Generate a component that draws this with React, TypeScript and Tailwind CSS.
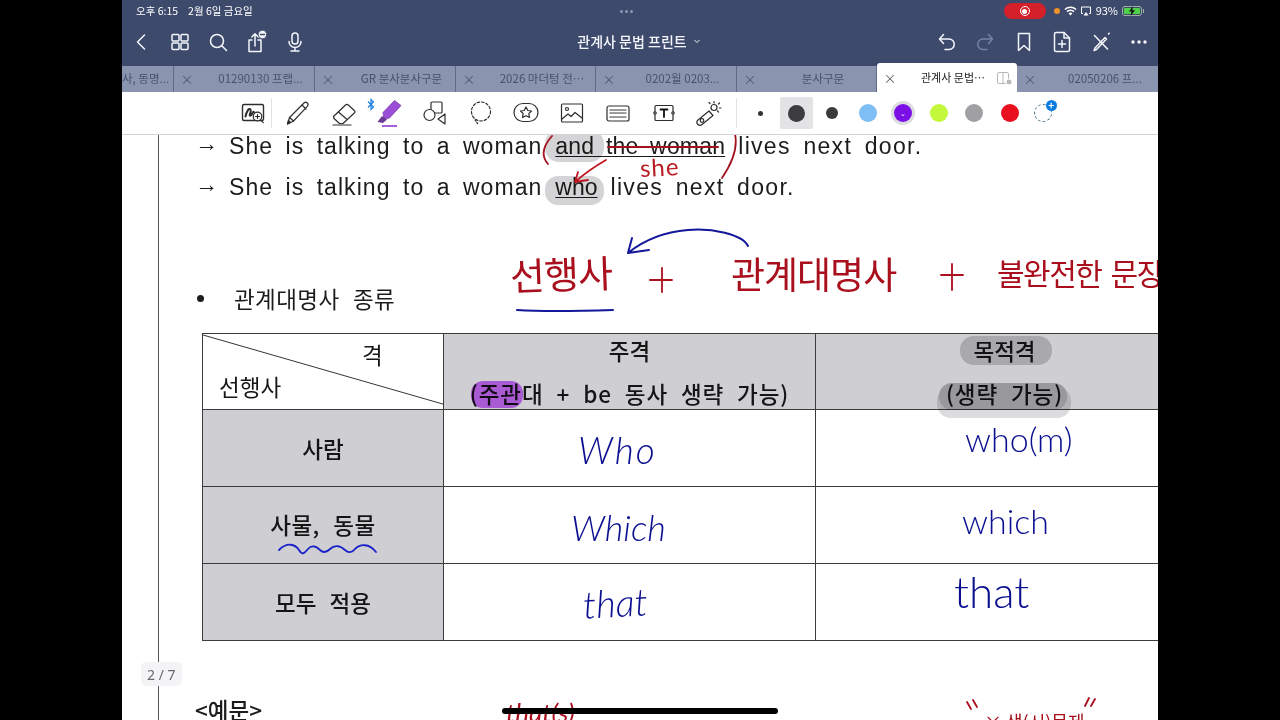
import React from "react";

const KR = "font-['Noto_Sans_CJK_KR','Noto_Sans',sans-serif]";

function NavIcon({ children, w = 24 }: { children: React.ReactNode; w?: number }) {
  return (
    <svg width={w} height={24} viewBox="0 0 24 24" fill="none" stroke="#f4f6fb" strokeWidth={1.5} strokeLinecap="round" strokeLinejoin="round">
      {children}
    </svg>
  );
}

function ToolIcon({ children }: { children: React.ReactNode }) {
  return (
    <svg width={28} height={28} viewBox="0 0 28 28" fill="none" stroke="#2e2e30" strokeWidth={1.2} strokeLinecap="round" strokeLinejoin="round">
      {children}
    </svg>
  );
}

function Tab({ label, w, noClose }: { label: string; w: string; noClose?: boolean }) {
  return (
    <div className={`${w} h-[26px] shrink-0 flex items-center bg-[#8a94ae] border-r border-[#5e6a8a] text-[#47526f] text-[11.5px]`}>
      {!noClose && <span className="w-[26px] text-center text-[13px] text-[#4e597a]">×</span>}
      <span className={`flex-1 whitespace-nowrap overflow-hidden ${noClose ? "text-right pr-[4px]" : "text-center pl-[7px]"}`}>{label}</span>
    </div>
  );
}

function Dot({ size, color, ring }: { size: string; color: string; ring?: boolean }) {
  return (
    <div className="w-[35.5px] h-[32px] flex items-center justify-center shrink-0">
      <div className={`${size} ${color} rounded-full flex items-center justify-center ${ring ? "ring-[3px] ring-[#dcdce0]" : ""}`}>
        {ring && <span className="text-white text-[7px] leading-none">⌄</span>}
      </div>
    </div>
  );
}

function Cell({ children, gray, border }: { children?: React.ReactNode; gray?: boolean; border?: boolean }) {
  return (
    <div className={`flex flex-col items-center justify-center border-b border-[#3c3c3c] ${border ? "border-r" : ""} ${gray ? "bg-[#cfced2]" : "bg-white"} text-[22.5px] text-[#151515] leading-none font-medium`}>
      {children}
    </div>
  );
}

export default function App() {
  return (
    <div className={`w-full h-[720px] bg-black flex justify-center overflow-hidden ${KR}`}>
      <div className="w-[1036px] h-[720px] flex flex-col bg-white relative overflow-hidden">
        {/* status bar */}
        <div className="h-[22px] shrink-0 bg-[#3d4a6c] flex items-center px-[14px] text-white text-[10.5px] leading-none relative">
          <span className="mr-[10px]">오후 6:15</span>
          <span>2월 6일 금요일</span>
          <div className="flex-1 flex justify-center gap-[2px] pr-[4px]">
            <span className="w-[3px] h-[3px] rounded-full bg-[#8b96b3]" />
            <span className="w-[3px] h-[3px] rounded-full bg-[#8b96b3]" />
            <span className="w-[3px] h-[3px] rounded-full bg-[#8b96b3]" />
          </div>
          <div className="w-[42px] h-[16px] rounded-full bg-[#d3202a] flex items-center justify-center mr-[8px]">
            <span className="w-[10px] h-[10px] rounded-full border border-white flex items-center justify-center">
              <span className="w-[5px] h-[5px] rounded-full bg-white" />
            </span>
          </div>
          <span className="w-[6px] h-[6px] rounded-full bg-[#f0922b] mr-[4px]" />
          <svg width="13" height="10" viewBox="0 0 13 10" className="mr-[3px]">
            <path d="M6.5 9.5 4.6 7.4a2.8 2.8 0 0 1 3.8 0ZM3.6 6.3 2.5 5.1a5.8 5.8 0 0 1 8 0L9.4 6.3a4.2 4.2 0 0 0-5.8 0ZM1.5 4 .4 2.9a8.9 8.9 0 0 1 12.2 0L11.5 4a7.3 7.3 0 0 0-10 0Z" fill="#fff" />
          </svg>
          <svg width="12" height="10" viewBox="0 0 12 10" className="mr-[4px]" fill="none" stroke="#fff" strokeWidth="1">
            <path d="M3 7.5H1.5V1h9v6.5H9" />
            <path d="M6 6 3.5 9.5h5Z" fill="#fff" stroke="none" />
          </svg>
          <span className="mr-[4px] text-[11px] -translate-y-[1.5px]">93%</span>
          <div className="relative w-[20px] h-[10px] border border-[#9fb0a0] rounded-[3px] p-[1px] mr-[1px]">
            <div className="w-full h-full bg-[#4fd24a] rounded-[1px]" />
            <svg width="10" height="10" viewBox="0 0 10 10" className="absolute left-[4px] -top-[1px]">
              <path d="M6 0 2 5.5h2.4L3.6 10 8 4.2H5.4Z" fill="#111" />
            </svg>
          </div>
          <span className="w-[1px] h-[4px] bg-[#9fb0a0]" />
        </div>

        {/* nav bar */}
        <div className="h-[44px] shrink-0 bg-[#3d4a6c] flex items-center relative pl-[7px] pr-[7px] pb-[4px] text-white">
          <div className="w-[24px] flex justify-center">
            <NavIcon><path d="M15.5 5 8.5 12l7 7" /></NavIcon>
          </div>
          <div className="ml-[15px] w-[24px]">
            <NavIcon>
              <rect x="4" y="4.500" width="7" height="6.500" rx="1" />
              <rect x="13" y="4.500" width="7" height="6.500" rx="1" />
              <rect x="4" y="13" width="7" height="6.500" rx="1" />
              <rect x="13" y="13" width="7" height="6.500" rx="1" />
            </NavIcon>
          </div>
          <div className="ml-[14px] w-[24px]">
            <NavIcon>
              <circle cx="11" cy="11" r="6.500" />
              <path d="m15.800 15.800 4.700 4.700" />
            </NavIcon>
          </div>
          <div className="ml-[13px] w-[24px]">
            <NavIcon w={26}>
              <path d="M8 10H5v11.500h12V10H14" />
              <path d="M11 16V4M7.800 7 11 3.800 14.200 7" />
              <circle cx="18.500" cy="4.500" r="4.200" fill="#f4f6fb" stroke="#3d4a6c" strokeWidth="0.800" />
              <path d="M16.500 4.500h4" stroke="#3d4a6c" strokeWidth="1.400" />
            </NavIcon>
          </div>
          <div className="ml-[16px] w-[24px]">
            <NavIcon>
              <rect x="9" y="3" width="6" height="11" rx="3" />
              <path d="M6 11.500a6 6 0 0 0 12 0M12 17.500V20M8 21h8" />
            </NavIcon>
          </div>
          <div className="absolute left-0 right-0 top-0 bottom-[6px] flex items-center justify-center pointer-events-none">
            <span className="text-[14px] font-medium text-[#f4f6fb] mr-[4px]">관계사 문법 프린트</span>
            <svg width="12" height="12" viewBox="0 0 12 12" fill="none" stroke="#f4f6fb" strokeWidth="1"><path d="m3.500 5 2.500 2.500L8.500 5" /></svg>
          </div>
          <div className="ml-auto flex items-center gap-[14.5px]">
            <NavIcon><path d="M8.500 4.500 4.500 9l4 4.500" /><path d="M5 9h9a5 5 0 0 1 0 10.500h-4" /></NavIcon>
            <svg width="24" height="24" viewBox="0 0 24 24" fill="none" stroke="#7683a3" strokeWidth={1.5} strokeLinecap="round" strokeLinejoin="round"><path d="m15.500 4.500 4 4.500-4 4.500" /><path d="M19 9h-9a5 5 0 0 0 0 10.500h4" /></svg>
            <NavIcon><path d="M6.500 3.500h11V20.500L12 15.500l-5.500 5Z" /></NavIcon>
            <NavIcon><path d="M14 2.500H6a1.500 1.500 0 0 0-1.500 1.500v16A1.500 1.500 0 0 0 6 21.500h12a1.500 1.500 0 0 0 1.500-1.500V8Z" /><path d="M14 2.500V8h5.500M12 10.500v7M8.500 14h7" /></NavIcon>
            <NavIcon>
              <path d="m5.500 5.500 13 13.500" />
              <path d="m5 20.500 2.500-1 10-10.500-1.500-1.500L6 18Z" />
              <path d="m19.500 4 .8-.8" />
            </NavIcon>
            <svg width="24" height="24" viewBox="0 0 24 24" fill="#f4f6fb"><circle cx="6" cy="12" r="1.700" /><circle cx="12" cy="12" r="1.700" /><circle cx="18" cy="12" r="1.700" /></svg>
          </div>
        </div>

        {/* tab strip */}
        <div className="h-[26px] shrink-0 bg-[#3d4a6c] flex items-end relative">
          <Tab label="사, 동명..." w="w-[52px]" noClose />
          <Tab label="01290130 프랩..." w="w-[141px]" />
          <Tab label="GR 분사분사구문" w="w-[141px]" />
          <Tab label="2026 마더텅 전⋯" w="w-[140px]" />
          <Tab label="0202월 0203..." w="w-[141px]" />
          <Tab label="분사구문" w="w-[140px]" />
          <div className="w-[140px] h-[29px] shrink-0 bg-white rounded-t-[3px] flex items-center text-[11px] text-[#222]">
            <span className="w-[26px] text-center text-[13px] text-[#666]">×</span>
            <span className="flex-1 text-center whitespace-nowrap pl-[8px]">관계사 문법⋯</span>
            <svg width="18" height="16" viewBox="0 0 18 16" fill="none" stroke="#b8b8bc" className="mr-[4px]">
              <rect x="2.500" y="2.500" width="11" height="11" rx="1.500" />
              <path d="M8 2.500v11" />
              <circle cx="14" cy="12" r="3" fill="#b8b8bc" stroke="#fff" />
            </svg>
          </div>
          <div className="flex-1 h-[26px] bg-[#8a94ae] flex items-center text-[#47526f] text-[11.500px]">
            <span className="w-[26px] text-center text-[13px] text-[#4e597a]">×</span>
            <span className="flex-1 text-center whitespace-nowrap pl-[9px]">02050206 프...</span>
          </div>
        </div>

        {/* tool bar */}
        <div className="h-[43px] shrink-0 bg-white border-b border-[#d5d5d8] flex items-center pl-[117px]">
          <ToolIcon>
            <rect x="3.500" y="5.500" width="21" height="16" rx="1.500" strokeWidth="1.400" />
            <path d="M6.500 17.500c1-5 3.500-9 5-7s-2.500 7 0 6 2-4.500 3.500-3.500" strokeWidth="2" />
            <circle cx="18.500" cy="17.500" r="4.300" fill="#fff" />
            <path d="M18.500 15.500v4M16.500 17.500h4M21.500 20.800l2.800 2.800" />
          </ToolIcon>
          <div className="w-[1px] h-[30px] bg-[#e2e2e4] ml-[4px] mr-[12px]" />
          <div className="flex items-center gap-[17.7px]">
            <ToolIcon>
              <path d="m3.500 25 2-6.500L20 4a2.200 2.200 0 0 1 3.300 3.300L9.500 22Z" />
              <path d="m18 6 4 4M5.500 18.500l4 3.500" />
              <path d="m3.500 25 1-3.500 2 2Z" fill="#222" />
            </ToolIcon>
            <ToolIcon>
              <path d="M3.500 17.500 15.500 6a2 2 0 0 1 2.800 0l6 5.500a1.500 1.500 0 0 1 0 2.500L13 24.500H9.500L4 19.500Z" />
              <path d="m8.500 13 8 7" />
              <path d="M3 26h18" />
            </ToolIcon>
            <div className="relative w-[28px] h-[28px]">
              <svg width="28" height="28" viewBox="0 0 28 28" fill="none" strokeLinejoin="round">
                <path d="M8 13.500 19.500 1.500 26 6.500 14.500 19 9 20Z" fill="#9b4fd6" stroke="#7a3ab0" strokeWidth="0.800" />
                <path d="m2.500 23 4.500-6 5 3.500-4 3.500Z" fill="#6b3a93" />
                <path d="M7 27h15" stroke="#9b4fd6" strokeWidth="1.800" />
              </svg>
              <svg width="8" height="13" viewBox="0 0 8 13" fill="none" stroke="#1d7fe0" strokeWidth="1.200" className="absolute -left-[8px] -top-[1px]">
                <path d="M1 3.500 6.500 9 4 11.500v-10L6.500 4 1 9.500" />
              </svg>
            </div>
            <ToolIcon>
              <rect x="10" y="3" width="11" height="11" rx="1" />
              <circle cx="8.500" cy="16" r="5.500" fill="#fff" />
              <path d="M24 15v10l-7-5Z" fill="#fff" />
            </ToolIcon>
            <ToolIcon>
              <circle cx="14" cy="12.500" r="9.500" strokeDasharray="2.500 2" />
              <path d="m8 21 3 4" strokeDasharray="1.500 1.500" />
            </ToolIcon>
            <ToolIcon>
              <rect x="2" y="4.500" width="24" height="18" rx="9" />
              <path d="m14 8 1.800 3.500 3.700.5-2.700 2.700.7 3.800-3.500-1.800-3.500 1.800.7-3.800L8.500 12l3.700-.5Z" />
            </ToolIcon>
            <ToolIcon>
              <rect x="3.500" y="5" width="21" height="18" rx="1" />
              <circle cx="9" cy="10" r="1.500" />
              <path d="m4 20 6-5 3 2.500 4-4 7 5.500" />
            </ToolIcon>
            <ToolIcon>
              <rect x="3" y="7" width="22" height="15" rx="2" />
              <path d="M6 11h16M6 14h16M6 18h16" strokeDasharray="1.500 1" />
            </ToolIcon>
            <ToolIcon>
              <rect x="5" y="6.500" width="18" height="15" rx="1" />
              <path d="M10.500 10.500h7M14 10.500v7.500" stroke="#111" strokeWidth="1.800" />
              <circle cx="5" cy="14" r="1.200" fill="#fff" />
              <circle cx="23" cy="14" r="1.200" fill="#fff" />
            </ToolIcon>
            <ToolIcon>
              <path d="m3 21 11-9 4 4.500-11 9a2.500 2.500 0 0 1-4-4.500Z" />
              <circle cx="7" cy="21.500" r="1.800" />
              <circle cx="19" cy="8.500" r="3" />
              <path d="M19 2.500V4M24.500 4l-1 1M26 9h-1.500M14 3.500l1 1M23.500 13l-1-1" />
            </ToolIcon>
          </div>
          <div className="w-[1px] h-[30px] bg-[#e2e2e4] ml-[13px] mr-[3px]" />
          <div className="flex items-center">
            <div className="w-[40px] h-[32px] flex items-center justify-center shrink-0">
              <div className="w-[5px] h-[5px] rounded-full bg-[#333]" />
            </div>
            <div className="w-[33px] h-[32px] bg-[#e3e3e5] flex items-center justify-center shrink-0 rounded-[2px]">
              <div className="w-[17px] h-[17px] rounded-full bg-[#3d3d40]" />
            </div>
            <div className="w-[1.5px] shrink-0" />
            <Dot size="w-[12px] h-[12px]" color="bg-[#3a3a3d]" />
            <Dot size="w-[18px] h-[18px]" color="bg-[#7fbdf5]" />
            <Dot size="w-[18px] h-[18px]" color="bg-[#7b0fe6]" ring />
            <Dot size="w-[18px] h-[18px]" color="bg-[#c4f83a]" />
            <Dot size="w-[18px] h-[18px]" color="bg-[#a0a0a3]" />
            <Dot size="w-[18px] h-[18px]" color="bg-[#e8101f]" />
            <div className="relative w-[18px] h-[18px] ml-[6px] rounded-full border border-dashed border-[#3f6f80]">
              <span className="absolute -right-[6px] -top-[5px] w-[11px] h-[11px] rounded-full bg-[#0a7be0] text-white text-[10px] leading-[10px] text-center font-bold">+</span>
            </div>
          </div>
        </div>

        {/* document */}
        <div className="flex-1 relative overflow-hidden pl-[36px]">
          <div className="h-full border-l border-[#555] pl-[36px] relative flex flex-col items-start">
            <div className="flex flex-col gap-[18px] text-[23px] leading-[23px] text-[#1c1c1c] tracking-[1.05px] [word-spacing:5px] font-['Liberation_Sans',sans-serif] whitespace-nowrap shrink-0">
              <div className="flex">
                <span className="w-[34px] -translate-y-[3px]">→</span>
                <span>She is talking to a woman</span>
                <span className="ml-[13px] tracking-[0.2px] underline decoration-1 underline-offset-2">and the woman</span>
                <span className="ml-[13px] tracking-[1.3px]">lives next door.</span>
              </div>
              <div className="flex">
                <span className="w-[34px] -translate-y-[3px]">→</span>
                <span>She is talking to a woman</span>
                <span className="ml-[13px] tracking-[0px] underline decoration-1 underline-offset-2">who</span>
                <span className="ml-[13px] tracking-[1.3px]">lives next door.</span>
              </div>
            </div>
            <div className={`mt-[84px] shrink-0 flex items-center text-[22.5px] leading-[30px] text-[#1c1c1c] ${KR}`}>
              <span className="w-[7px] h-[7px] mr-[30px] ml-[2px] rounded-full bg-[#1c1c1c]" />
              <span className="tracking-[0.4px] [word-spacing:8px]">관계대명사 종류</span>
            </div>

            <div className={`mt-[20px] ml-[7px] w-[991px] shrink-0 grid grid-cols-[241px_372px_1fr] grid-rows-[76px_77px_77px_77px] border-t border-l border-[#3c3c3c] ${KR}`}>
              <div className="relative border-b border-r border-[#3c3c3c] text-[22.5px] text-[#151515]">
                <svg className="absolute inset-0 w-full h-full" viewBox="0 0 241 76" preserveAspectRatio="none">
                  <path d="M0 1 241 71" stroke="#333" strokeWidth="1" />
                </svg>
                <span className="absolute left-[159px] top-[5px] leading-[30px]">격</span>
                <span className="absolute left-[16px] top-[37px] leading-[30px]">선행사</span>
              </div>
              <Cell gray border>
                <span className="mb-[20px]">주격</span>
                <span className="tracking-[0.9px] [word-spacing:7px]">(주관대 + be 동사 생략 가능)</span>
              </Cell>
              <Cell gray>
                <span className="mb-[20px]">목적격</span>
                <span className="tracking-[0.9px] [word-spacing:7px]">(생략 가능)</span>
              </Cell>
              <Cell gray border>사람</Cell>
              <Cell border />
              <Cell />
              <Cell gray border><span className="-mt-[2px] tracking-[0.5px] [word-spacing:8px]">사물, 동물</span></Cell>
              <Cell border />
              <Cell />
              <Cell gray border><span className="[word-spacing:8px]">모두 적용</span></Cell>
              <Cell border />
              <Cell />
            </div>

            <div className="mt-[53px] shrink-0 text-[22.5px] leading-[30px] text-[#1c1c1c] font-medium">&lt;예문&gt;</div>
          </div>

          {/* page counter */}
          <div className="absolute left-[19px] top-[527px] px-[6px] h-[24px] flex items-center bg-[#f4f4f6] rounded-[5px] text-[14px] text-[#6a6a6e] font-['Noto_Sans',sans-serif]">2 / 7</div>

          {/* highlighter ink */}
          <svg className="absolute inset-0 w-full h-full pointer-events-none mix-blend-multiply" viewBox="122 135 1036 585" fill="none">
            <rect x="545" y="130" width="59" height="32" rx="14" fill="#d4d4d6" />
            <rect x="545" y="176" width="59" height="29" rx="13" fill="#d4d4d6" />
            <rect x="960" y="336" width="92" height="29" rx="14" fill="#d0d0d1" />
            <rect x="937" y="387" width="134" height="31" rx="14" fill="#dcdcde" />
            <rect x="939" y="383" width="128" height="27" rx="13" fill="#bcbcbe" />
            <rect x="471" y="381" width="52" height="27" rx="12" fill="#cf70ff" />
          </svg>
          {/* pen ink */}
          <svg className="absolute inset-0 w-full h-full pointer-events-none" viewBox="122 135 1036 585" fill="none" strokeLinecap="round" strokeLinejoin="round">
            <path d="M552 136c-9 10-11 20-4 28" stroke="#a3121f" strokeWidth="1.800" />
            <path d="M735 134c3 14-2 28-13 44" stroke="#a3121f" strokeWidth="1.800" />
            <path d="M608 147h110" stroke="#a3121f" strokeWidth="2" />
            <path d="M606 160 C592 168 584 174 575 182 M575 182l3-10M575 182l13-2" stroke="#c0161f" strokeWidth="1.800" />
            <path d="M748 246c-6-12-36-18-60-16-24 2-44 10-60 23M628 253l4-15M628 253l21-3" stroke="#13189a" strokeWidth="2" />
            <path d="M517 310c30 2 65 1 96 0" stroke="#13189a" strokeWidth="2" />
            <path d="M650 280h22M662 268v24" stroke="#a90f1d" strokeWidth="1.800" />
            <path d="M941 275h22M952 264v26" stroke="#a90f1d" strokeWidth="1.800" />
            <path d="M279 550c8-8 16-6 20 0 3 5 5 4 9-1s9-2 12 1 6 3 10-1 10-4 15 1c3 3 7 3 10-1 5-5 14-6 21 3" stroke="#1a22c9" strokeWidth="1.800" />
            <path d="M967 702l4 7M973 700l4 7M1089 698l-4 8M1095 699l-4 7" stroke="#a90f1d" strokeWidth="1.800" />
          </svg>

          {/* handwritten words */}
          <div className="absolute inset-0 pointer-events-none font-['Lato','Noto_Sans_CJK_KR',sans-serif]">
            <span className="absolute left-[518px] top-[20px] text-[#b81c24] text-[24px] leading-none -rotate-3 tracking-[1px]">she</span>
            <span className="absolute left-[388px] top-[119px] text-[#a90f1d] text-[38px] leading-none font-['Noto_Sans_CJK_KR',sans-serif] -rotate-2 tracking-[-1px]">선행사</span>
            <span className="absolute left-[609px] top-[120px] text-[#a90f1d] text-[37px] leading-none font-['Noto_Sans_CJK_KR',sans-serif] tracking-[-1px]">관계대명사</span>
            <span className="absolute left-[875px] top-[122px] text-[#a90f1d] text-[30px] leading-none font-['Noto_Sans_CJK_KR',sans-serif] whitespace-nowrap tracking-[-1.500px] [word-spacing:4px]">불완전한 문장</span>
            <span className="absolute left-[456px] top-[296px] text-[#0c1090] text-[37px] leading-none font-light italic tracking-[2px]">Who</span>
            <span className="absolute left-[449px] top-[374px] text-[#0c1090] text-[36px] leading-none font-light italic">Which</span>
            <span className="absolute left-[461px] top-[448px] text-[#0c1090] text-[38px] leading-none font-light italic -rotate-3">that</span>
            <span className="absolute left-[843px] top-[287px] text-[#0c1090] text-[34px] leading-none font-light">who(m)</span>
            <span className="absolute left-[840px] top-[369px] text-[#0c1090] text-[34px] leading-none font-light">which</span>
            <span className="absolute left-[832px] top-[434px] text-[#0c1090] text-[44px] leading-none font-light">that</span>
            <span className="absolute left-[384px] top-[564px] text-[#a90f1d] text-[26px] leading-none italic">that(s)</span>
            <span className="absolute left-[862px] top-[577px] text-[#a90f1d] text-[18px] leading-none font-['Noto_Sans_CJK_KR',sans-serif]">× 생(시)문제</span>
          </div>
        </div>

        {/* home indicator */}
        <div className="absolute left-[380px] top-[708px] w-[276px] h-[6px] rounded-full bg-black" />
      </div>
    </div>
  );
}
